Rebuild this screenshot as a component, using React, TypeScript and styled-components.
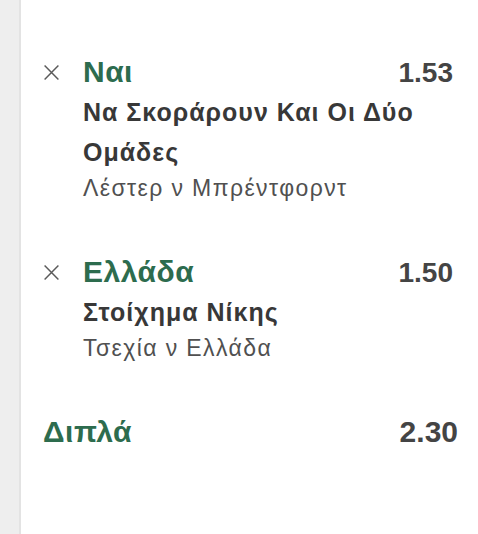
import React from 'react';
import styled, { createGlobalStyle } from 'styled-components';

type Selection = {
  id: string;
  pick: string;
  odds: string;
  market: string;
  event: string;
};

const selections: Selection[] = [
  {
    id: 'sel-1',
    pick: 'Ναι',
    odds: '1.53',
    market: 'Να Σκοράρουν Και Οι Δύο Ομάδες',
    event: 'Λέστερ ν Μπρέντφορντ',
  },
  {
    id: 'sel-2',
    pick: 'Ελλάδα',
    odds: '1.50',
    market: 'Στοίχημα Νίκης',
    event: 'Τσεχία ν Ελλάδα',
  },
];

const CloseIcon = () => (
  <svg width="17" height="17" viewBox="0 0 16 16" aria-hidden="true">
    <path d="M1.5 1.5 L14.5 14.5 M14.5 1.5 L1.5 14.5" stroke="#5a5a5a" strokeWidth="1.4" fill="none" />
  </svg>
);

const App = () => {
  return (
    <>
      <GlobalStyle />
      <Page>
        <Rail />
        <Slip>
          {selections.map((sel) => (
            <Row key={sel.id}>
              <Remove aria-label="remove">
                <CloseIcon />
              </Remove>
              <Details>
                <Header>
                  <Pick>{sel.pick}</Pick>
                  <Odds>{sel.odds}</Odds>
                </Header>
                <Market>{sel.market}</Market>
                <Event>{sel.event}</Event>
              </Details>
            </Row>
          ))}
          <Summary>
            <SummaryLabel>Διπλά</SummaryLabel>
            <SummaryOdds>2.30</SummaryOdds>
          </Summary>
        </Slip>
      </Page>
    </>
  );
};

export default App;

const GlobalStyle = createGlobalStyle`
  html, body {
    margin: 0;
    padding: 0;
    background: #fff;
    font-family: 'Liberation Sans', Arial, sans-serif;
  }
`;

const Page = styled.div`
  display: flex;
  min-height: 534px;
`;

const Rail = styled.div`
  width: 19px;
  flex-shrink: 0;
  background: #eeeeee;
  border-right: 2px solid #e3e3e3;
`;

const Slip = styled.main`
  flex: 1;
  padding: 54px 25px 0 22px;
  display: flex;
  flex-direction: column;
  gap: 50px;
`;

const Row = styled.div`
  display: grid;
  grid-template-columns: 40px 1fr;
  align-items: start;
`;

const Remove = styled.button`
  border: none;
  background: transparent;
  padding: 0;
  margin: 10px 0 0 0;
  width: 17px;
  height: 17px;
  display: flex;
  cursor: pointer;
`;

const Details = styled.div`
  display: flex;
  flex-direction: column;
`;

const Header = styled.div`
  display: flex;
  justify-content: space-between;
  align-items: baseline;
  margin-bottom: 1px;
`;

const Pick = styled.div`
  font-size: 30px;
  line-height: 36px;
  letter-spacing: 0.5px;
  font-weight: 700;
  color: #2d6c4e;
`;

const Market = styled.div`
  font-size: 25px;
  line-height: 40px;
  letter-spacing: 1px;
  font-weight: 700;
  color: #383838;
`;

const Event = styled.div`
  font-size: 23px;
  line-height: 32px;
  letter-spacing: 1.4px;
  color: #505050;
`;

const Odds = styled.div`
  font-size: 28px;
  line-height: 36px;
  font-weight: 700;
  color: #444;
`;

const Summary = styled.div`
  display: flex;
  justify-content: space-between;
  align-items: baseline;
  margin-right: -5px;
`;

const SummaryLabel = styled.div`
  font-size: 30px;
  line-height: 36px;
  letter-spacing: 0.5px;
  font-weight: 700;
  color: #2d6c4e;
`;

const SummaryOdds = styled.div`
  font-size: 30px;
  line-height: 36px;
  font-weight: 700;
  color: #444;
`;
